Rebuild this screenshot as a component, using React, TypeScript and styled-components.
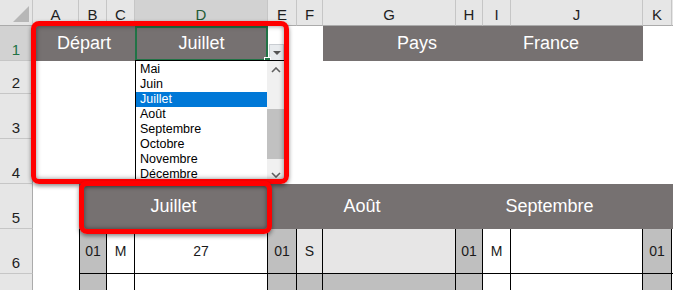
import * as React from 'react';
import styled, { createGlobalStyle } from 'styled-components';

const GlobalStyle = createGlobalStyle`
  html, body {
    margin: 0;
    padding: 0;
    background: #ffffff;
    overflow: hidden;
  }
  body {
    font-family: 'Liberation Sans', Arial, sans-serif;
  }
`;

const COLS = [33, 46, 28, 28, 133, 29, 26, 133, 27, 28, 132, 29, 40];
const ROWS = [26, 35, 33, 45, 45, 45, 45, 40];
const LETTERS = ['A', 'B', 'C', 'D', 'E', 'F', 'G', 'H', 'I', 'J', 'K', ''];

const BAND = '#767171';
const DARK = '#bfbfbf';
const LIGHT = '#e7e6e6';

const Sheet = styled.div`
  position: relative;
  width: 673px;
  height: 290px;
  overflow: hidden;
  display: grid;
  grid-template-columns: ${COLS.map(c => `${c}px`).join(' ')};
  grid-template-rows: ${ROWS.map(r => `${r}px`).join(' ')};
`;

const Corner = styled.div`
  grid-column: 1;
  grid-row: 1;
  position: relative;
  background: #e6e6e6;
  border-right: 1px solid #c6c6c6;
  border-bottom: 1px solid #ababab;
  box-sizing: border-box;
  &::after {
    content: '';
    position: absolute;
    right: 3px;
    bottom: 3px;
    width: 0;
    height: 0;
    border-left: 16px solid transparent;
    border-bottom: 16px solid #b7b7b7;
  }
`;

const ColHead = styled.div<{ $col: number; $active?: boolean }>`
  grid-column: ${p => p.$col};
  grid-row: 1;
  box-sizing: border-box;
  background: ${p => (p.$active ? '#d2d2d2' : '#e6e6e6')};
  border-right: 1px solid #c6c6c6;
  border-bottom: 1px solid ${p => (p.$active ? '#217346' : '#ababab')};
  display: flex;
  align-items: center;
  justify-content: center;
  padding-top: 3px;
  font-size: 15px;
  color: ${p => (p.$active ? '#1f5b36' : '#1e1e1e')};
`;

const RowHead = styled.div<{ $row: number; $active?: boolean }>`
  grid-column: 1;
  grid-row: ${p => p.$row};
  box-sizing: border-box;
  background: ${p => (p.$active ? '#d2d2d2' : '#e6e6e6')};
  border-right: 1px solid ${p => (p.$active ? '#217346' : '#ababab')};
  border-bottom: 1px solid #c6c6c6;
  display: flex;
  align-items: flex-end;
  justify-content: center;
  padding-bottom: 2px;
  font-size: 15px;
  color: ${p => (p.$active ? '#217346' : '#1e1e1e')};
`;

const Band = styled.div<{ $col: string; $row: number; $align?: 'left' | 'center'; $pad?: number }>`
  grid-column: ${p => p.$col};
  grid-row: ${p => p.$row};
  background: ${BAND};
  color: #ffffff;
  font-size: 18px;
  display: flex;
  align-items: center;
  justify-content: ${p => (p.$align === 'left' ? 'flex-start' : 'center')};
  padding-left: ${p => p.$pad ?? 0}px;
`;

const SelectedCell = styled(Band)`
  position: relative;
  box-shadow: inset 0 0 0 2px #217346;
  &::after {
    content: '';
    position: absolute;
    right: -3px;
    bottom: -3px;
    width: 5px;
    height: 5px;
    background: #217346;
    border: 1px solid #ffffff;
    z-index: 2;
  }
`;

const DropCell = styled.div`
  grid-column: 6;
  grid-row: 2;
  display: flex;
  align-items: flex-end;
  padding-left: 1px;
`;

const DropButton = styled.div`
  width: 15px;
  height: 17px;
  box-sizing: border-box;
  background: #e8ebee;
  border: 1px solid #c9cdd2;
  display: flex;
  align-items: center;
  justify-content: center;
  &::before {
    content: '';
    width: 0;
    height: 0;
    border-left: 4px solid transparent;
    border-right: 4px solid transparent;
    border-top: 4px solid #555555;
  }
`;

const Cell = styled.div<{ $col: number; $row: number; $bg: string; $first?: boolean }>`
  grid-column: ${p => p.$col};
  grid-row: ${p => p.$row};
  box-sizing: border-box;
  background: ${p => p.$bg};
  border-right: 1px solid #000000;
  border-bottom: 1px solid #000000;
  border-left: ${p => (p.$first ? '1px solid #000000' : 'none')};
  display: flex;
  align-items: center;
  justify-content: center;
  font-size: 14px;
  color: #1a1a1a;
`;

const ListBox = styled.div`
  position: absolute;
  left: 135px;
  top: 60px;
  width: 150px;
  height: 124px;
  box-sizing: border-box;
  background: #ffffff;
  border-left: 1px solid #000000;
  border-top: 1px solid #000000;
  display: flex;
  z-index: 3;
`;

const Items = styled.div`
  flex: 1;
  display: flex;
  flex-direction: column;
  padding-top: 1px;
`;

const Item = styled.div<{ $selected?: boolean }>`
  height: 15px;
  line-height: 15px;
  padding-left: 4px;
  font-size: 12.5px;
  color: ${p => (p.$selected ? '#ffffff' : '#000000')};
  background: ${p => (p.$selected ? '#0078d7' : 'transparent')};
`;

const ScrollBar = styled.div`
  width: 18px;
  background: #f0f0f0;
  display: flex;
  flex-direction: column;
  align-items: center;
`;

const Arrow = styled.div`
  height: 18px;
  display: flex;
  align-items: center;
  justify-content: center;
`;

const Track = styled.div`
  flex: 1;
  width: 100%;
  display: flex;
  flex-direction: column;
  padding-top: 30px;
  padding-bottom: 6px;
`;

const Thumb = styled.div`
  height: 50px;
  background: #c1c1c1;
`;

const Highlight = styled.div`
  position: absolute;
  box-sizing: border-box;
  border: 5px solid #ff0000;
  border-radius: 8px;
  box-shadow: 0 2px 4px rgba(0, 0, 0, 0.45), inset 0 0 5px rgba(0, 0, 0, 0.45);
  z-index: 4;
  pointer-events: none;
`;

const Chevron: React.FC<{ up?: boolean }> = ({ up }) => (
  <svg width="10" height="6" viewBox="0 0 10 6">
    <polyline
      points={up ? '1,5 5,1 9,5' : '1,1 5,5 9,1'}
      fill="none"
      stroke="#606060"
      strokeWidth="1.6"
    />
  </svg>
);

const MONTHS = ['Mai', 'Juin', 'Juillet', 'Août', 'Septembre', 'Octobre', 'Novembre', 'Décembre'];

type Row = { bg: string; text?: string }[];

const ROW6: Row = [
  { bg: DARK, text: '01' },
  { bg: '#ffffff', text: 'M' },
  { bg: '#ffffff', text: '27' },
  { bg: DARK, text: '01' },
  { bg: LIGHT, text: 'S' },
  { bg: LIGHT },
  { bg: DARK, text: '01' },
  { bg: '#ffffff', text: 'M' },
  { bg: '#ffffff' },
  { bg: DARK, text: '01' },
  { bg: '#ffffff' },
];

const ROW7: Row = [
  { bg: DARK },
  { bg: '#ffffff' },
  { bg: '#ffffff' },
  { bg: DARK },
  { bg: DARK },
  { bg: DARK },
  { bg: DARK },
  { bg: '#ffffff' },
  { bg: '#ffffff' },
  { bg: DARK },
  { bg: '#ffffff' },
];

const App: React.FC = () => {
  return (
    <>
      <GlobalStyle />
      <Sheet>
        <Corner />
        {LETTERS.map((l, i) => (
          <ColHead key={`c${i}`} $col={i + 2} $active={l === 'D'}>
            {l}
          </ColHead>
        ))}
        {[1, 2, 3, 4, 5, 6, 7].map(r => (
          <RowHead key={`r${r}`} $row={r + 1} $active={r === 1}>
            {r < 7 ? r : null}
          </RowHead>
        ))}

        <Band $col="2 / 5" $row={2}>Départ</Band>
        <SelectedCell $col="5 / 6" $row={2}>Juillet</SelectedCell>
        <DropCell>
          <DropButton />
        </DropCell>
        <Band $col="8 / 11" $row={2}>Pays</Band>
        <Band $col="11 / 12" $row={2} $align="left" $pad={12}>France</Band>

        <Band $col="3 / 6" $row={6}>Juillet</Band>
        <Band $col="6 / 9" $row={6}>Août</Band>
        <Band $col="9 / 12" $row={6}>Septembre</Band>
        <Band $col="12 / 14" $row={6} />

        {ROW6.map((c, i) => (
          <Cell key={`a${i}`} $col={i + 3} $row={7} $bg={c.bg} $first={i === 0}>
            {c.text}
          </Cell>
        ))}
        {ROW7.map((c, i) => (
          <Cell key={`b${i}`} $col={i + 3} $row={8} $bg={c.bg} $first={i === 0}>
            {c.text}
          </Cell>
        ))}

        <ListBox>
          <Items>
            {MONTHS.map(m => (
              <Item key={m} $selected={m === 'Juillet'}>
                {m}
              </Item>
            ))}
          </Items>
          <ScrollBar>
            <Arrow>
              <Chevron up />
            </Arrow>
            <Track>
              <Thumb />
            </Track>
            <Arrow>
              <Chevron />
            </Arrow>
          </ScrollBar>
        </ListBox>

        <Highlight style={{ left: 31, top: 21, width: 258, height: 163 }} />
        <Highlight style={{ left: 79, top: 181, width: 193, height: 53 }} />
      </Sheet>
    </>
  );
};

export default App;
